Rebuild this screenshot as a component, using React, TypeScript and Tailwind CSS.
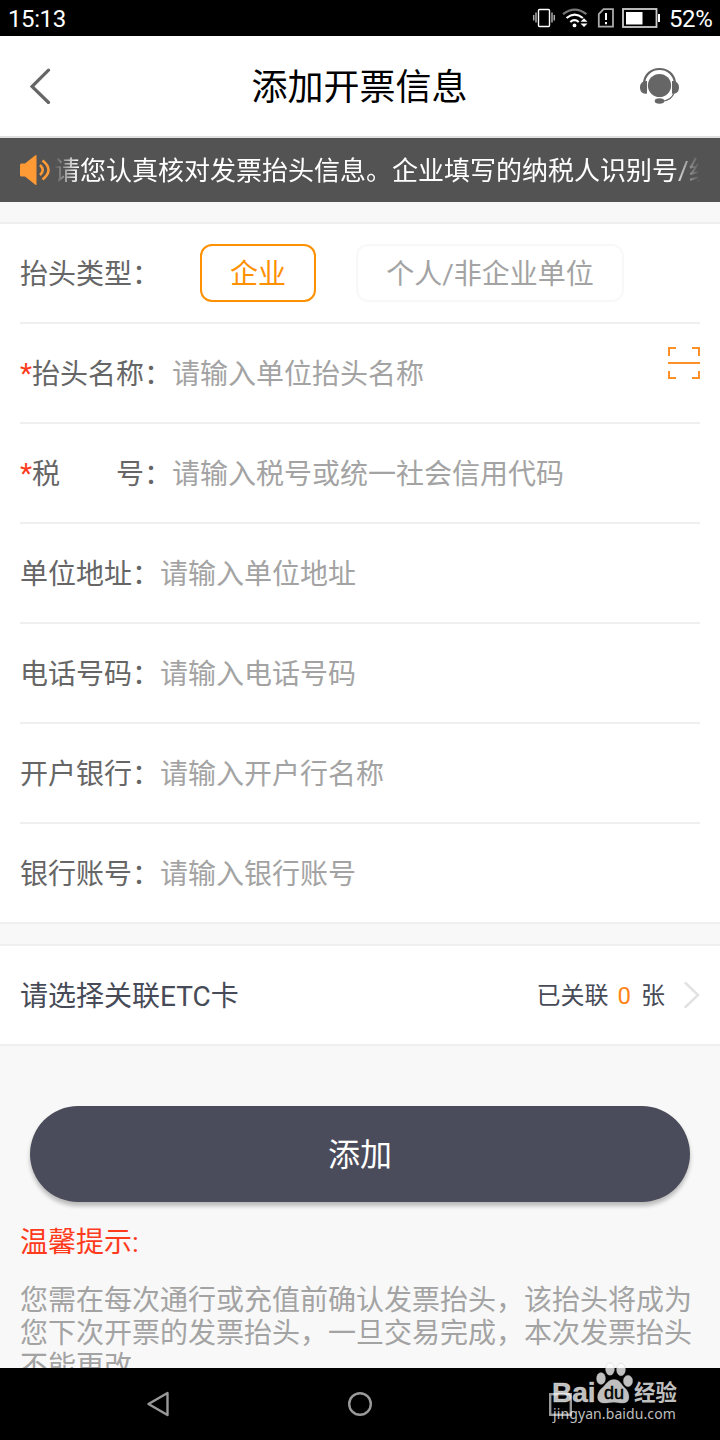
import type { ReactNode } from 'react'

type Field = {
  label: string
  placeholder: string
  required?: boolean
  scan?: boolean
}

const fields: Field[] = [
  { label: '抬头名称：', placeholder: '请输入单位抬头名称', required: true, scan: true },
  { label: '税\u3000\u3000号：', placeholder: '请输入税号或统一社会信用代码', required: true },
  { label: '单位地址：', placeholder: '请输入单位地址' },
  { label: '电话号码：', placeholder: '请输入电话号码' },
  { label: '开户银行：', placeholder: '请输入开户行名称' },
  { label: '银行账号：', placeholder: '请输入银行账号' },
]

function StatusBar() {
  return (
    <div className="flex h-9 shrink-0 items-center justify-between bg-black pr-2 pl-2 text-[24px] leading-9 text-white">
      <span className="pt-0.5 tracking-[-0.4px]">15:13</span>
      <div className="flex h-9 items-center">
        <svg width="136" height="36" viewBox="530 0 136 36" fill="none" aria-hidden="true">
          <rect x="538.5" y="9.5" width="11" height="17" rx="1" stroke="#fff" strokeWidth="1.4" />
          <path d="M536 12.5v10M552 12.5v10" stroke="#aaa" strokeWidth="1.5" />
          <path d="M533.7 15v5.5M554.3 15v5.5" stroke="#aaa" strokeWidth="1.5" />
          <path d="M563 14.2q11.7-9 23.4 0" stroke="#777" strokeWidth="2.2" />
          <path d="M566.5 18q8.2-6.6 16.4 0M570.3 22q4.2-3.6 8.4 0" stroke="#fff" strokeWidth="2.2" />
          <circle cx="574.5" cy="25.4" r="1.9" fill="#fff" />
          <path d="M580.500 21.800l3.500-3.600 3.500 3.600zM580.500 23.400h7l-3.500 3.600z" fill="#fff" />
          <path d="M603.5 9.2h9.500v17.500h-14.200v-12.500z" stroke="#aaa" strokeWidth="1.8" />
          <path d="M606 13v7M606 22v2.200" stroke="#fff" strokeWidth="2" />
          <rect x="623" y="9" width="33.5" height="18" stroke="#ccc" strokeWidth="1.8" />
          <rect x="626" y="12" width="16.5" height="12.5" fill="#fff" />
          <rect x="658" y="14" width="2" height="8" fill="#fff" />
        </svg>
        <span className="ml-[3px] w-[43px] pt-0.5 tracking-[-0.4px]">52%</span>
      </div>
    </div>
  )
}

function Header() {
  return (
    <header className="flex h-[102px] shrink-0 items-center justify-between border-b-2 border-[#e0e0e0] bg-white pr-10 pl-[30px]">
      <svg width="49" height="36" viewBox="0 0 49 36" fill="none" aria-hidden="true">
        <path d="M18.5 2.2L2 18.5l16.5 16" stroke="#666" strokeWidth="3.2" strokeLinecap="round" />
      </svg>
      <h1 className="pt-1 text-[36px] leading-[54px] text-black">添加开票信息</h1>
      <svg width="40" height="38" viewBox="0 0 40 38" aria-hidden="true">
        <circle cx="19.5" cy="18.5" r="11.6" fill="#666" />
        <path d="M4 16C5 7 11.5 2 19.5 2S34 7 35 16" fill="none" stroke="#666" strokeWidth="2.2" />
        <path d="M7 14v12.500C3 27.500 0 25 0 20.500S3 14 7 14zM32 14v12.500c4 1 7-1.500 7-6S36 14 32 14z" fill="#666" />
        <path d="M34 26c-1.500 4-5 7-10 8" fill="none" stroke="#666" strokeWidth="1.2" />
        <ellipse cx="19.5" cy="34" rx="4.8" ry="2.8" fill="#666" />
      </svg>
    </header>
  )
}

function Notice() {
  return (
    <div className="flex h-16 shrink-0 items-center bg-[#535353] pr-5 pl-5">
      <svg width="34" height="32" viewBox="0 0 34 32" fill="none" aria-hidden="true" className="shrink-0">
        <path d="M0 11q0-1.500 1.500-1.500H5L15 1.500q1.500-1 1.500 0v29q0 1-1.500 0L5 22.500H1.500Q0 22.500 0 21z" fill="#ff9a35" />
        <path d="M20 11q5.500 5 0 10M22.500 6.500q12 9.500 0 19" stroke="#ff9a35" strokeWidth="2.6" />
      </svg>
      <p className="w-[646px] overflow-hidden pt-0.5 whitespace-nowrap text-[26px] leading-10 text-white [mask-image:linear-gradient(to_right,transparent,black_24px,black_618px,transparent)]">
        请您认真核对发票抬头信息。企业填写的纳税人识别号/统
      </p>
    </div>
  )
}

function Row({ children, last }: { children: ReactNode; last?: boolean }) {
  return (
    <div className={last ? 'flex h-[98px] items-center' : 'flex h-[100px] items-center border-b-2 border-[#efefef]'}>
      {children}
    </div>
  )
}

function ScanIcon() {
  return (
    <svg width="32" height="32" viewBox="0 0 32 32" fill="none" aria-hidden="true" className="mb-5 ml-auto">
      <path d="M1 9V1h7M24 1h7v8M31 24v7h-7M8 31H1v-7M0 16h32" stroke="#ff9027" strokeWidth="2" />
    </svg>
  )
}

function InvoiceForm() {
  return (
    <section className="shrink-0 border-y-2 border-[#efefef] bg-white px-5 text-[28px] leading-10 text-[#666]">
      <Row>
        <span className="w-[180px] pt-1">抬头类型：</span>
        <button className="h-[58px] w-[116px] rounded-[12px] border-2 border-[#ff9000] pt-1 text-[#ff9000]">企业</button>
        <button className="ml-10 h-[58px] w-[268px] rounded-[12px] border-2 border-[#f8f8f8] pt-1 text-[#a3a3a3]">
          个人/非企业单位
        </button>
      </Row>
      {fields.map((field, index) => (
        <Row key={field.label} last={index === fields.length - 1}>
          {field.required && <span className="pt-0.5 text-[#ff3b1d]">*</span>}
          <span className="pt-1">{field.label}</span>
          <span className="pt-1 text-[#a3a3a3]">{field.placeholder}</span>
          {field.scan && <ScanIcon />}
        </Row>
      ))}
    </section>
  )
}

function CardLink() {
  return (
    <section className="mt-5 flex h-[102px] shrink-0 items-center justify-between border-y-2 border-[#efefef] bg-white px-5 text-[#474b57]">
      <span className="pt-1 text-[28px] leading-10">请选择关联ETC卡</span>
      <div className="flex items-center text-[24px] leading-9">
        <span className="pt-0.5">已关联</span>
        <span className="mr-[10px] ml-[9px] pt-0.5 text-[#ff8519]">0</span>
        <span className="pt-0.5">张</span>
        <svg width="16" height="28" viewBox="0 0 16 28" fill="none" aria-hidden="true" className="ml-[19px]">
          <path d="M1.500 2L14 14 1.500 26" stroke="#e2e2e2" strokeWidth="2.5" strokeLinecap="round" />
        </svg>
      </div>
    </section>
  )
}

function NavBar() {
  return (
    <nav className="flex h-[72px] shrink-0 items-center justify-between bg-black pr-[148px] pl-[146px]">
      <svg width="24" height="26" viewBox="0 0 24 26" fill="none" aria-hidden="true">
        <path d="M21.5 2v22L2.500 13z" stroke="#999" strokeWidth="2.4" strokeLinejoin="round" />
      </svg>
      <svg width="24" height="24" viewBox="0 0 24 24" fill="none" aria-hidden="true">
        <circle cx="12" cy="12" r="10.8" stroke="#999" strokeWidth="2.4" />
      </svg>
      <svg width="23" height="23" viewBox="0 0 23 23" fill="none" aria-hidden="true">
        <rect x="1.2" y="1.2" width="20.6" height="20.6" stroke="#999" strokeWidth="2.4" />
      </svg>
    </nav>
  )
}

function Watermark() {
  return (
    <div className="absolute top-[1360px] left-[552px] h-16 w-32 text-white/75">
      <span className="absolute top-[17px] left-0 font-['Liberation_Sans'] text-[28px] leading-8 font-bold [-webkit-text-stroke:0.6px_rgba(255,255,255,0.5)]">
        Bai
      </span>
      <svg width="40" height="44" viewBox="0 0 40 44" aria-hidden="true" className="absolute top-0 left-[43px]">
        <g fill="#fff" fillOpacity="0.75" stroke="#aaa" strokeOpacity="0.35" strokeWidth="0.8">
          <ellipse cx="6" cy="18.5" rx="4.5" ry="6" />
          <ellipse cx="15" cy="9" rx="4.5" ry="6.3" />
          <ellipse cx="26" cy="9.5" rx="4.5" ry="6.3" />
          <ellipse cx="33" cy="21" rx="4.7" ry="5.8" />
          <path d="M19 19.500c6 0 7 5 11 8.500 4 3 7 14-1 15-4 .5-6-.8-10-.8s-8 1.300-11 .8c-8-1-6-11-1-15 4-3.500 6-8.500 12-8.500z" />
        </g>
      </svg>
      <span className="absolute top-[21px] left-[52px] font-['Liberation_Sans'] text-[18px] leading-6 text-black [-webkit-text-stroke:0.5px_black]">
        du
      </span>
      <span className="absolute top-[17px] left-[82px] text-[21.5px] leading-8 font-bold">经验</span>
      <span className="absolute top-[44px] left-[1px] font-['Noto_Sans'] text-[14px] leading-5 tracking-[0.1px]">
        jingyan.baidu.com
      </span>
    </div>
  )
}

export default function App() {
  return (
    <div
      lang="zh-CN"
      className="relative flex h-[1440px] w-[720px] flex-col overflow-hidden bg-[#f8f8f8] font-[Roboto,'Noto_Sans_CJK_SC',sans-serif]"
    >
      <StatusBar />
      <Header />
      <Notice />
      <main className="flex min-h-0 flex-1 flex-col overflow-hidden pt-5">
        <InvoiceForm />
        <CardLink />
        <button className="mx-[30px] mt-[60px] h-24 shrink-0 rounded-full bg-[#4b4c5b] pt-0.5 text-[32px] text-white shadow-[0_4px_4px_rgba(0,0,0,0.25)]">
          添加
        </button>
        <h2 className="mt-[21px] ml-5 shrink-0 text-[28px] leading-10 text-[#ff3b1d]">温馨提示:</h2>
        <p className="mt-[21px] ml-5 shrink-0 text-[28px] leading-[33px] whitespace-nowrap text-[#a3a3a3]">
          您需在每次通行或充值前确认发票抬头，该抬头将成为
          <br />
          您下次开票的发票抬头，一旦交易完成，本次发票抬头
          <br />
          不能更改
        </p>
      </main>
      <NavBar />
      <Watermark />
    </div>
  )
}
